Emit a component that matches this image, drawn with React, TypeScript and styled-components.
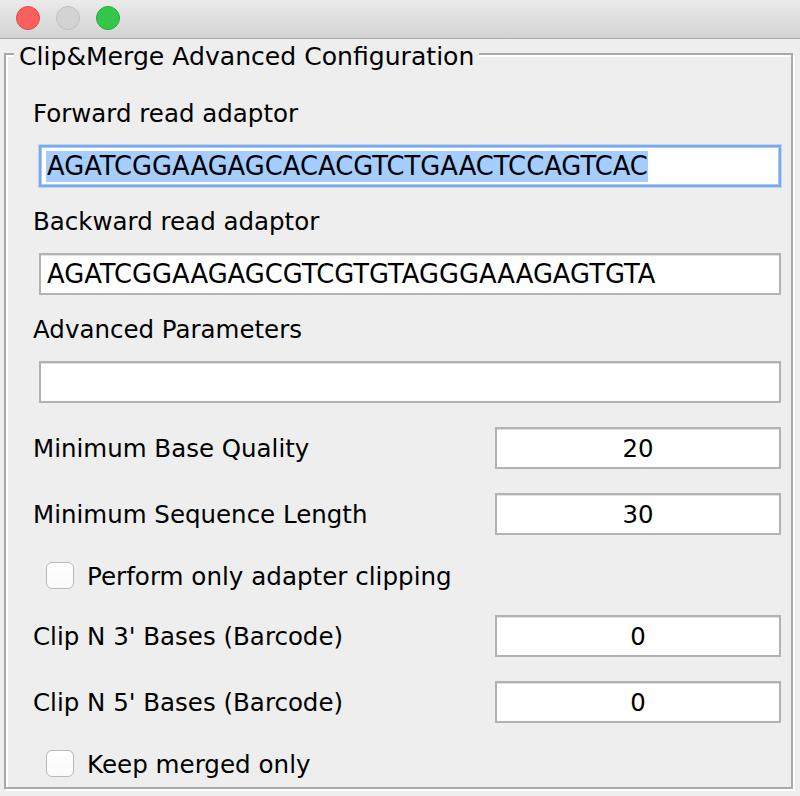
import React from "react";
import styled, { createGlobalStyle } from "styled-components";

const GlobalStyle = createGlobalStyle`
  html, body {
    margin: 0;
    padding: 0;
    background: #eeeeee;
  }
  body {
    font-family: "DejaVu Sans", "Liberation Sans", sans-serif;
    color: #000;
  }
`;

const Window = styled.div`
  width: 800px;
  height: 796px;
  background: #eeeeee;
  display: flex;
  flex-direction: column;
  overflow: hidden;
`;

const TitleBar = styled.div`
  height: 39px;
  flex: none;
  border-bottom: 1px solid #a8a8a8;
  background: linear-gradient(#ebebeb, #d2d2d2);
  display: flex;
  align-items: flex-start;
  gap: 16px;
  padding: 6px 0 0 16px;
  box-sizing: border-box;
`;

const Light = styled.div<{ $fill: string; $edge: string }>`
  width: 24px;
  height: 24px;
  border-radius: 50%;
  box-sizing: border-box;
  background: ${(p) => p.$fill};
  border: 1px solid ${(p) => p.$edge};
`;

const Content = styled.div`
  padding: 14px 7px 0 4px;
`;

const Group = styled.div`
  position: relative;
  border: 2px solid #a9a9a9;
  box-shadow: inset 2px 2px 0 #ffffff, 2px 2px 0 #ffffff;
  padding: 43px 10px 8px 27px;
`;

const Legend = styled.div`
  position: absolute;
  top: -13px;
  left: 8px;
  padding: 0 5px;
  background: #eeeeee;
  font-size: 25.1px;
  line-height: 30px;
  white-space: nowrap;
`;

const Stack = styled.div`
  display: flex;
  flex-direction: column;
  gap: 19px;
`;

const FieldBlock = styled.div`
  display: flex;
  flex-direction: column;
  gap: 17px;
`;

const Label = styled.div`
  font-size: 24.5px;
  line-height: 32px;
  height: 30px;
  white-space: nowrap;
`;

const Field = styled.div<{ $focused?: boolean; $center?: boolean }>`
  height: 42px;
  box-sizing: border-box;
  background: #ffffff;
  border: 2px solid ${(p) => (p.$focused ? "#7aa9ec" : "#b2b2b2")};
  box-shadow: ${(p) =>
    p.$focused
      ? "0 0 0 1px #bcd6f6, inset 0 0 0 1px #a9c9f3"
      : "inset 0 1px 0 #e2e2e2"};
  display: flex;
  align-items: center;
  justify-content: ${(p) => (p.$center ? "center" : "flex-start")};
  padding: 1px 5px 0 5px;
  font-size: 24.4px;
  line-height: 31px;
  white-space: nowrap;
  overflow: hidden;
`;

const WideField = styled(Field)`
  margin-left: 6px;
`;

const Sequence = styled.span<{ $selected?: boolean }>`
  font-size: 25.8px;
  line-height: 31px;
  padding-left: 1px;
  background: ${(p) => (p.$selected ? "#a5cdfe" : "transparent")};
`;

const Rows = styled.div`
  display: flex;
  flex-direction: column;
  gap: 24px;
  margin-top: 5px;
`;

const ValueRow = styled.div`
  display: grid;
  grid-template-columns: 1fr 286px;
  align-items: center;
  height: 42px;
`;

const CheckRow = styled.label`
  display: flex;
  align-items: center;
  gap: 13px;
  height: 32px;
  padding-left: 13px;
  font-size: 24.6px;
  line-height: 32px;
`;

const CheckText = styled.span`
  padding-top: 3px;
`;

const Box = styled.span`
  width: 28px;
  height: 27px;
  box-sizing: border-box;
  border: 1px solid #b9b9b9;
  border-radius: 6px;
  background: linear-gradient(#ffffff, #fafafa);
  flex: none;
`;

export default function App() {
  return (
    <>
      <GlobalStyle />
      <Window>
        <TitleBar>
          <Light $fill="#fc605c" $edge="#de4b46" />
          <Light $fill="#d3d3d3" $edge="#bfbfbf" />
          <Light $fill="#34c84a" $edge="#2aa83b" />
        </TitleBar>
        <Content>
          <Group>
            <Legend>Clip&amp;Merge Advanced Configuration</Legend>
            <Stack>
              <FieldBlock>
                <Label>Forward read adaptor</Label>
                <WideField $focused>
                  <Sequence $selected>AGATCGGAAGAGCACACGTCTGAACTCCAGTCAC</Sequence>
                </WideField>
              </FieldBlock>
              <FieldBlock>
                <Label>Backward read adaptor</Label>
                <WideField>
                  <Sequence>AGATCGGAAGAGCGTCGTGTAGGGAAAGAGTGTA</Sequence>
                </WideField>
              </FieldBlock>
              <FieldBlock>
                <Label>Advanced Parameters</Label>
                <WideField />
              </FieldBlock>
              <Rows>
                <ValueRow>
                  <Label>Minimum Base Quality</Label>
                  <Field $center>20</Field>
                </ValueRow>
                <ValueRow>
                  <Label>Minimum Sequence Length</Label>
                  <Field $center>30</Field>
                </ValueRow>
                <CheckRow>
                  <Box />
                  <CheckText>Perform only adapter clipping</CheckText>
                </CheckRow>
                <ValueRow>
                  <Label>Clip N 3' Bases (Barcode)</Label>
                  <Field $center>0</Field>
                </ValueRow>
                <ValueRow>
                  <Label>Clip N 5' Bases (Barcode)</Label>
                  <Field $center>0</Field>
                </ValueRow>
                <CheckRow>
                  <Box />
                  <CheckText>Keep merged only</CheckText>
                </CheckRow>
              </Rows>
            </Stack>
          </Group>
        </Content>
      </Window>
    </>
  );
}
